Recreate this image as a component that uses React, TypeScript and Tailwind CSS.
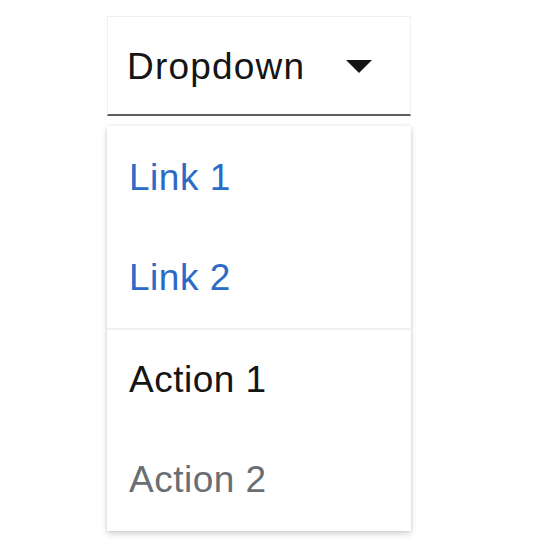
export default function App() {
  const font = { fontFamily: '"Liberation Sans", Arial, sans-serif' };
  return (
    <div className="min-h-[550px] bg-white pl-[107px] pt-4" style={font}>
      <div className="flex w-[304px] flex-col">
        <button className="flex h-[100px] items-center justify-between border border-b-2 border-[#f0f0f0] border-b-[#5a5d61] bg-white pt-[2px] pl-[19px] pr-[38px] text-[37px] tracking-[1.2px] text-[#151515]">
          <span>Dropdown</span>
          <svg width="26" height="13" viewBox="0 0 26 13">
            <path d="M0 0 H26 L13 13 Z" fill="#151515" />
          </svg>
        </button>
        <div className="mt-[10px] flex flex-col bg-white pt-[2px] pb-px text-[37px] tracking-[0.5px] shadow-[0_3px_6px_rgba(3,3,3,0.16),0_0_3px_rgba(3,3,3,0.1)]">
          <a className="flex h-[100px] items-center pl-[22px] text-[#2b6ac6]">Link 1</a>
          <a className="flex h-[100px] items-center pl-[22px] text-[#2b6ac6]">Link 2</a>
          <div className="h-[2px] bg-[#f0f0f0]" />
          <div className="flex h-[100px] items-center pl-[22px] text-[#151515]">Action 1</div>
          <div className="flex h-[100px] items-center pl-[22px] text-[#6a6e73]">Action 2</div>
        </div>
      </div>
    </div>
  );
}
